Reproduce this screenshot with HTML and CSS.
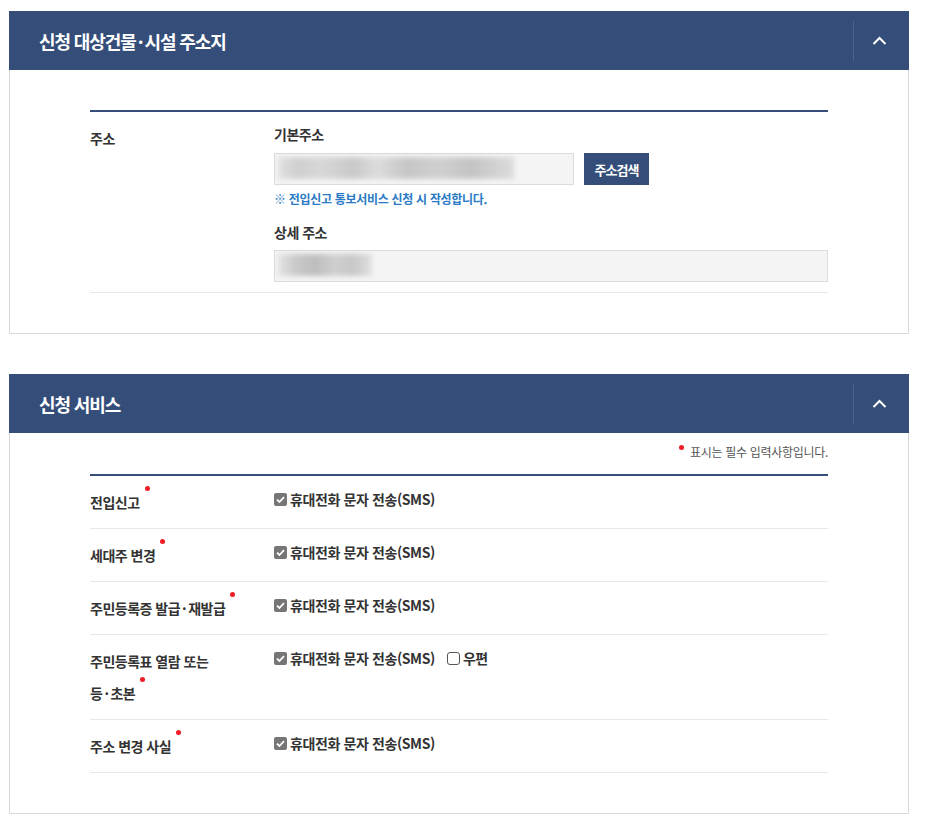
FILE: index.html
```html
<!DOCTYPE html>
<html lang="ko">
<head>
<meta charset="utf-8">
<title>신청 서비스</title>
<link rel="stylesheet" href="styles.css">
</head>
<body>
<div class="page">
  <section class="panel">
    <header class="panel-head">
      <h2 class="panel-title">신청 대상건물<span class="mid">·</span>시설 주소지</h2>
      <button class="toggle" type="button" aria-label="접기">
        <svg width="15" height="9" viewBox="0 0 15 9"><polyline points="1.5,8 7.5,2 13.5,8" fill="none" stroke="#fff" stroke-width="2"/></svg>
      </button>
    </header>
    <div class="panel-body">
      <div class="form-table">
        <div class="row">
          <div class="row-label">주소</div>
          <div class="row-field">
            <div class="field-label">기본주소</div>
            <div class="input-line">
              <div class="input input-short"><span class="blur blur-long"></span></div>
              <button class="btn-search" type="button">주소검색</button>
            </div>
            <p class="notice">※ 전입신고 통보서비스 신청 시 작성합니다.</p>
            <div class="field-label field-label-gap">상세 주소</div>
            <div class="input input-full"><span class="blur blur-short"></span></div>
          </div>
        </div>
      </div>
    </div>
  </section>

  <section class="panel">
    <header class="panel-head">
      <h2 class="panel-title">신청 서비스</h2>
      <button class="toggle" type="button" aria-label="접기">
        <svg width="15" height="9" viewBox="0 0 15 9"><polyline points="1.5,8 7.5,2 13.5,8" fill="none" stroke="#fff" stroke-width="2"/></svg>
      </button>
    </header>
    <div class="panel-body panel-body-services">
      <p class="required-note"><span class="req-dot"></span>표시는 필수 입력사항입니다.</p>
      <div class="form-table">
        <div class="row">
          <div class="row-label">전입신고<span class="req"></span></div>
          <div class="check-field">
            <label class="option"><span class="box box-checked"><svg width="13" height="13" viewBox="0 0 13 13"><path d="M3 6.6 L5.4 9 L10 4.2" fill="none" stroke="#fff" stroke-width="1.8"/></svg></span>휴대전화 문자 전송(SMS)</label>
          </div>
        </div>
        <div class="row">
          <div class="row-label">세대주 변경<span class="req"></span></div>
          <div class="check-field">
            <label class="option"><span class="box box-checked"><svg width="13" height="13" viewBox="0 0 13 13"><path d="M3 6.6 L5.4 9 L10 4.2" fill="none" stroke="#fff" stroke-width="1.8"/></svg></span>휴대전화 문자 전송(SMS)</label>
          </div>
        </div>
        <div class="row">
          <div class="row-label">주민등록증 <span class="nowrap">발급<span class="mid">·</span>재발급<span class="req"></span></span></div>
          <div class="check-field">
            <label class="option"><span class="box box-checked"><svg width="13" height="13" viewBox="0 0 13 13"><path d="M3 6.6 L5.4 9 L10 4.2" fill="none" stroke="#fff" stroke-width="1.8"/></svg></span>휴대전화 문자 전송(SMS)</label>
          </div>
        </div>
        <div class="row">
          <div class="row-label">주민등록표 열람 또는 <span class="nowrap">등<span class="mid">·</span>초본<span class="req"></span></span></div>
          <div class="check-field">
            <label class="option"><span class="box box-checked"><svg width="13" height="13" viewBox="0 0 13 13"><path d="M3 6.6 L5.4 9 L10 4.2" fill="none" stroke="#fff" stroke-width="1.8"/></svg></span>휴대전화 문자 전송(SMS)</label>
            <label class="option"><span class="box box-empty"></span>우편</label>
          </div>
        </div>
        <div class="row">
          <div class="row-label">주소 변경 사실<span class="req"></span></div>
          <div class="check-field">
            <label class="option"><span class="box box-checked"><svg width="13" height="13" viewBox="0 0 13 13"><path d="M3 6.6 L5.4 9 L10 4.2" fill="none" stroke="#fff" stroke-width="1.8"/></svg></span>휴대전화 문자 전송(SMS)</label>
          </div>
        </div>
      </div>
    </div>
  </section>
</div>
</body>
</html>
```

FILE: styles.css
```css
body {
  margin: 0;
  background: #fff;
  color: #333;
  font-family: "Noto Sans CJK KR", "Noto Sans", sans-serif;
}

.page {
  width: 900px;
  padding: 11px 0 12px 9px;
}

.panel + .panel {
  margin-top: 40px;
}

.panel-head {
  display: flex;
  align-items: center;
  height: 59px;
  padding-left: 30px;
  background: #344e79;
}

.panel-title {
  flex: 1;
  margin: 0;
  font-size: 18px;
  font-weight: 700;
  line-height: 24px;
  letter-spacing: -1.1px;
  color: #fff;
}

.mid {
  margin: 0 2px;
}

.nowrap {
  white-space: nowrap;
}

.toggle {
  display: flex;
  align-items: center;
  justify-content: center;
  width: 56px;
  height: 40px;
  padding: 0 4px 0 0;
  border: 0;
  border-left: 1px solid #4c6390;
  background: transparent;
}

.panel-body {
  padding: 40px 80px;
  border: 1px solid #d9d9d9;
  border-top: 0;
}

.panel-body-services {
  padding-top: 9px;
}

.form-table {
  border-top: 2px solid #344e79;
}

.row {
  display: grid;
  grid-template-columns: 184px 1fr;
  border-bottom: 1px solid #e8e8e8;
}

.row-label {
  padding: 10px 20px 10px 0;
  font-size: 14px;
  font-weight: 700;
  line-height: 32px;
  letter-spacing: -0.5px;
  color: #333;
  word-break: keep-all;
}

.req {
  display: inline-block;
  width: 5px;
  height: 5px;
  margin-left: 5px;
  border-radius: 50%;
  background: #ee1c25;
  vertical-align: top;
}

.row-field {
  padding: 10px 0;
  font-size: 14px;
}

.field-label {
  margin-bottom: 7px;
  font-weight: 700;
  line-height: 24px;
  letter-spacing: -0.5px;
}

.field-label-gap {
  margin-top: 12px;
  margin-bottom: 6px;
}

.input-line {
  display: flex;
  gap: 10px;
}

.input {
  box-sizing: border-box;
  height: 32px;
  padding: 3px 0 0 3px;
  border: 1px solid #dcdcdc;
  background: #f4f4f4;
}

.input-short {
  width: 300px;
}

.blur {
  display: block;
  height: 22px;
  filter: blur(2.5px);
}

.blur-long {
  width: 236px;
  background: linear-gradient(90deg, #e2e2e2 0, #cfcfcf 8%, #d8d8d8 18%, #c9c9c9 32%, #dcdcdc 42%, #c6c6c6 55%, #d0d0d0 68%, #c4c4c4 82%, #dcdcdc 100%);
}

.blur-short {
  width: 94px;
  background: linear-gradient(90deg, #e3e3e3 0, #c8c8c8 20%, #bdbdbd 40%, #cfcfcf 60%, #c7c7c7 80%, #e0e0e0 100%);
}

.btn-search {
  width: 65px;
  height: 32px;
  padding: 0;
  border: 0;
  background: #344e79;
  color: #fff;
  font-family: "Noto Sans CJK KR", sans-serif;
  font-size: 13px;
  font-weight: 700;
  letter-spacing: -1px;
}

.notice {
  margin: 5px 0 0;
  font-size: 12px;
  font-weight: 700;
  line-height: 18px;
  letter-spacing: -0.3px;
  color: #2a7ac5;
}

.required-note {
  margin: 0 0 12px;
  text-align: right;
  font-size: 12px;
  line-height: 20px;
  letter-spacing: -0.3px;
  color: #555;
}

.req-dot {
  display: inline-block;
  width: 5px;
  height: 5px;
  margin: 3px 6px 0 0;
  border-radius: 50%;
  background: #ee1c25;
  vertical-align: top;
}

.check-field {
  display: flex;
  align-items: flex-start;
  gap: 12px;
  padding: 10px 0;
  font-size: 14px;
  font-weight: 700;
  line-height: 26px;
  letter-spacing: -0.4px;
  color: #333;
}

.option {
  display: inline-flex;
  align-items: center;
  gap: 3px;
}

.box {
  display: block;
  box-sizing: border-box;
  width: 13px;
  height: 13px;
  border-radius: 2px;
}

.box svg {
  display: block;
}

.box-checked {
  background: #767676;
}

.box-empty {
  border: 1px solid #555;
  border-radius: 3px;
  background: #fff;
}
```
